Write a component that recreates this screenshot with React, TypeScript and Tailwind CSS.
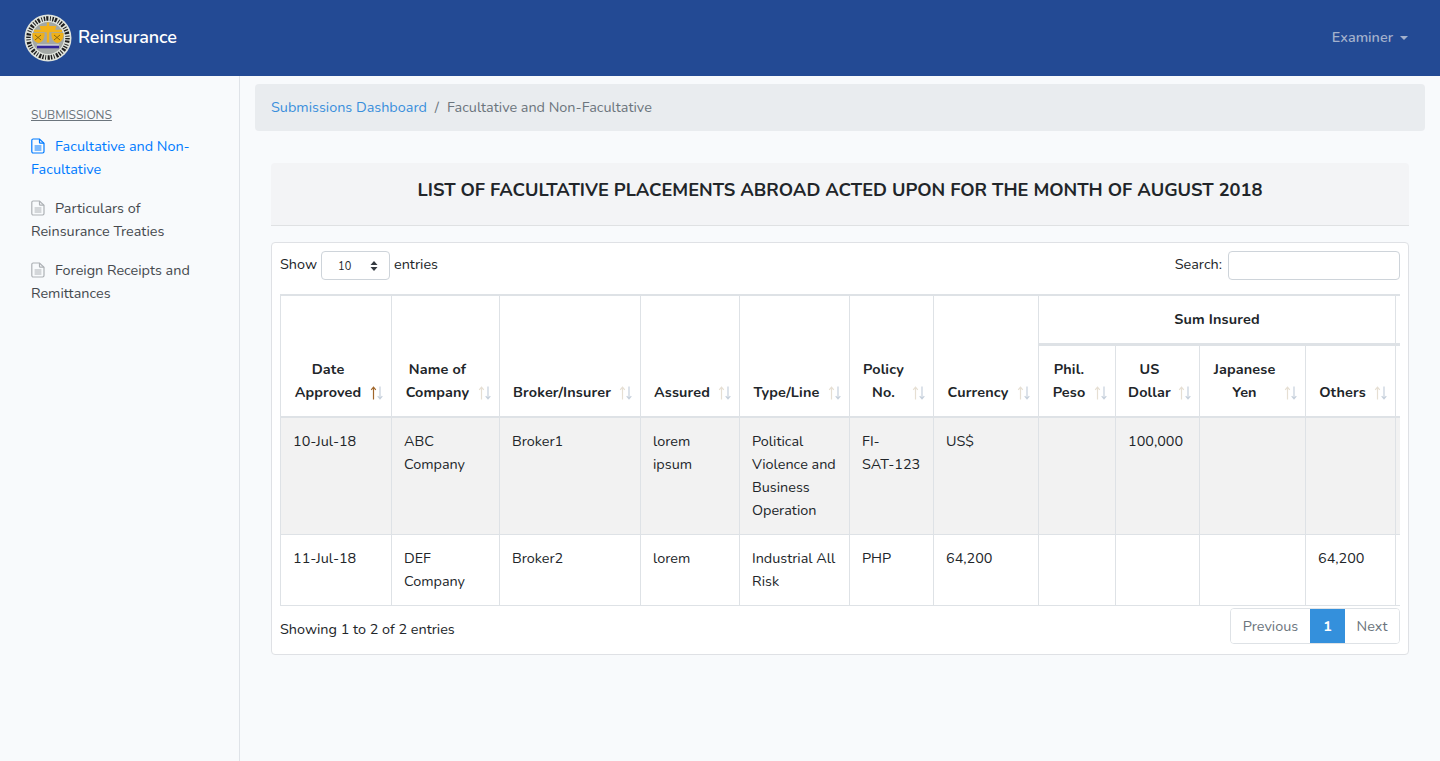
import React from "react";

function Sort({ active = false }: { active?: boolean }) {
  return (
    <svg width="14" height="14" viewBox="0 0 14 14" className="absolute right-[7px] bottom-[16px]" fill="none" strokeWidth="1.2">
      <path d="M3.5 13.5V1.2M1.2 3.8 3.5 1.2l2.3 2.6" stroke={active ? "#a0662b" : "#e6dfd3"} />
      <path d="M10 .5v12.3M7.7 10.2l2.3 2.6 2.3-2.6" stroke="#c6d0dc" />
    </svg>
  );
}

function Doc({ color }: { color: string }) {
  return (
    <svg width="14" height="16" viewBox="0 0 14 16" fill="none" stroke={color} strokeWidth="1.2" className="inline-block align-[-3px] mr-[10px]">
      <path d="M2.2 1h6.3L13 5.2v8.4c0 .8-.6 1.4-1.4 1.4H2.2c-.8 0-1.4-.6-1.4-1.4V2.4C.8 1.6 1.4 1 2.2 1Z" />
      <path d="M8.5 1v3.4c0 .5.3.8.8.8H13M3.6 8h6.8M3.6 10h6.8M3.6 12h6.8" />
    </svg>
  );
}

function Seal() {
  return (
    <svg width="48" height="48" viewBox="0 0 48 48" className="shrink-0">
      <circle cx="24" cy="24" r="23.5" fill="#dfe3dc" />
      <circle cx="24" cy="24" r="19.5" fill="none" stroke="#1f1f1f" strokeWidth="4.5" strokeDasharray="1.4 1.1 2.2 1.6 .9 1.5" />
      <circle cx="24" cy="24" r="16" fill="#a3a8a5" />
      <path d="M17 16 15.5 12h17L31 16Z" fill="#f2b21b" />
      <path d="M24 8.5v20M10 17h28" stroke="#f2b21b" strokeWidth="2.4" />
      <path d="M8.5 19h12c.5 4-1.5 9.5-6 10-4.5-.5-6.5-6-6-10ZM27.5 19h12c.5 4-1.5 9.5-6 10-4.5-.5-6.5-6-6-10Z" fill="#eeb019" />
      <path d="M11 21l6 5M17 21l-6 5M30 21l6 5M36 21l-6 5" stroke="#7d5f10" strokeWidth=".9" />
      <rect x="13" y="30.5" width="22" height="1.2" fill="#e8ecec" />
      <rect x="13" y="31.7" width="22" height="2.6" fill="#33269a" />
    </svg>
  );
}

const thBase = "relative border-r border-[#dee2e6] align-bottom font-bold text-[#212529] text-[14.4px] tracking-[0.15px] leading-[23px] pb-[12px] pl-3 pr-[30px] text-center";
const cols = [111, 108, 141, 99, 110, 84, 105, 77, 84, 106, 90, 40];
const tdBase = "border-r border-[#dee2e6] align-top px-3 pt-3 pb-[12px] text-[#212529] whitespace-pre-line";

function Row({ cells, shaded, h }: { cells: string[]; shaded?: boolean; h: string }) {
  return (
    <tr className={`${shaded ? "bg-[#f2f2f2]" : "bg-white"} border-b border-[#dee2e6] ${h}`}>
      {cells.map((c, i) => (
        <td key={i} className={tdBase}>{c}</td>
      ))}
    </tr>
  );
}

const F = "font-['Nunito','Noto_Sans','Liberation_Sans',sans-serif]";

function HeadLabel({ t }: { t: string[] }) {
  return (
    <div className="whitespace-nowrap -ml-[1px] -mr-[3px]">
      {t.map((l) => <div key={l}>{l}</div>)}
    </div>
  );
}

export default function App() {
  return (
    <div className={`min-h-[761px] bg-[#f8fafc] flex flex-col text-[14.4px] leading-[23px] text-[#212529] ${F}`}>
      <header className="h-[76px] bg-[#234a94] flex items-center justify-between pl-6 pr-[32px] shrink-0">
        <div className="flex items-center gap-[6px]">
          <Seal />
          <span className="text-white text-[18px] font-semibold tracking-[-0.1px] -mt-[2px]">Reinsurance</span>
        </div>
        <div className="flex items-center gap-[7px] text-[#a3b1cc] font-semibold -mt-[1px]">
          Examiner
          <span className="w-0 h-0 border-x-[4px] border-x-transparent border-t-[4px] border-t-[#a3b1cc]" />
        </div>
      </header>
      <div className="flex flex-1">
        <aside className="w-[240px] shrink-0 border-r border-[#dfe3e8] pl-[31px] pr-[40px] pt-[29px]">
          <div className="text-[12px] leading-[20px] underline text-[#6c757d]">SUBMISSIONS</div>
          <div className="mt-[10px] text-[#007bff]"><Doc color="#007bff" />Facultative and Non-Facultative</div>
          <div className="mt-[16px] text-[#45494e]"><Doc color="#adb1b5" />Particulars of Reinsurance Treaties</div>
          <div className="mt-[16px] text-[#45494e]"><Doc color="#adb1b5" />Foreign Receipts and Remittances</div>
        </aside>
        <main className="flex-1 min-w-0 px-[15px] pt-[8px]">
          <nav className="h-[47px] bg-[#e9ecef] rounded flex items-center px-4">
            <span className="text-[#3a8fdc]">Submissions Dashboard</span>
            <span className="text-[#6c757d] px-2">/</span>
            <span className="text-[#6c757d]">Facultative and Non-Facultative</span>
          </nav>
          <div className="mx-4 mt-[32px]">
            <div className="h-[63px] bg-[#f3f4f6] border-b border-[#dfe1e3] rounded-t flex justify-center pt-[16px] text-[18.28px] font-bold text-[#212529]">
              LIST OF FACULTATIVE PLACEMENTS ABROAD ACTED UPON FOR THE MONTH OF AUGUST 2018
            </div>
            <div className="mt-4 h-[413px] bg-white border border-[#dfe1e5] rounded px-2 pt-2">
              <div className="flex items-center justify-between h-[29px]">
                <div className="flex items-center gap-[4px]">
                  <span className="-mt-[2px]">Show</span>
                  <span className="w-[69px] h-[29px] border border-[#ced4da] rounded flex items-center justify-between pl-4 pr-[11px] text-[11px]">
                    <span className="mt-[2px]">10</span>
                    <svg width="8" height="12" viewBox="0 0 8 12" fill="#343a40"><path d="M4 1 7.5 5h-7ZM4 11 .5 7h7Z" /></svg>
                  </span>
                  <span className="-mt-[2px]">entries</span>
                </div>
                <div className="flex items-center gap-[6px]">
                  <span className="-mt-[2px]">Search:</span>
                  <span className="w-[172px] h-[29px] border border-[#ced4da] rounded bg-white" />
                </div>
              </div>
              <div className="mt-[14px] overflow-hidden">
                <table className="table-fixed border-collapse border-l border-[#dee2e6] w-[1155px] text-[14.4px] leading-[23px]">
                  <colgroup>
                    {cols.map((w, i) => <col key={i} style={{ width: w }} />)}
                  </colgroup>
                  <thead>
                    <tr className="border-t-2 border-[#dee2e6] h-[49px]">
                      {[["Date", "Approved"], ["Name of", "Company"], ["Broker/Insurer"], ["Assured"], ["Type/Line"], ["Policy", "No."], ["Currency"]].map((t, i) => (
                        <th key={i} rowSpan={2} className={`${thBase} border-b-2`}>
                          <HeadLabel t={t} />
                          <Sort active={i === 0} />
                        </th>
                      ))}
                      <th colSpan={4} className="border-r border-b-[3px] border-[#dee2e6] font-bold text-[14.4px] tracking-[0.15px]">Sum Insured</th>
                      <th className="border-b-[3px] border-[#dee2e6]"></th>
                    </tr>
                    <tr className="h-[73px] border-b-2 border-[#dee2e6]">
                      {[["Phil.", "Peso"], ["US", "Dollar"], ["Japanese", "Yen"], ["Others"]].map((t, i) => (
                        <th key={i} className={thBase}>
                          <HeadLabel t={t} />
                          <Sort />
                        </th>
                      ))}
                      <th></th>
                    </tr>
                  </thead>
                  <tbody>
                    <Row shaded h="h-[117px]" cells={["10-Jul-18", "ABC Company", "Broker1", "lorem ipsum", "Political Violence and Business Operation", "FI-\nSAT-123", "US$", "", "100,000", "", "", ""]} />
                    <Row h="h-[71px]" cells={["11-Jul-18", "DEF Company", "Broker2", "lorem", "Industrial All Risk", "PHP", "64,200", "", "", "", "64,200", ""]} />
                  </tbody>
                </table>
              </div>
              <div className="flex justify-between items-start">
                <div className="mt-[12px]">Showing 1 to 2 of 2 entries</div>
                <div className="mt-[2px] flex h-[36px] border border-[#dee2e6] rounded text-[#6c757d] overflow-hidden">
                  <span className="w-[79px] flex items-center justify-center bg-white">Previous</span>
                  <span className="w-[35px] flex items-center justify-center bg-[#3490dc] text-white font-bold">1</span>
                  <span className="w-[54px] flex items-center justify-center bg-white">Next</span>
                </div>
              </div>
            </div>
          </div>
        </main>
      </div>
    </div>
  );
}
